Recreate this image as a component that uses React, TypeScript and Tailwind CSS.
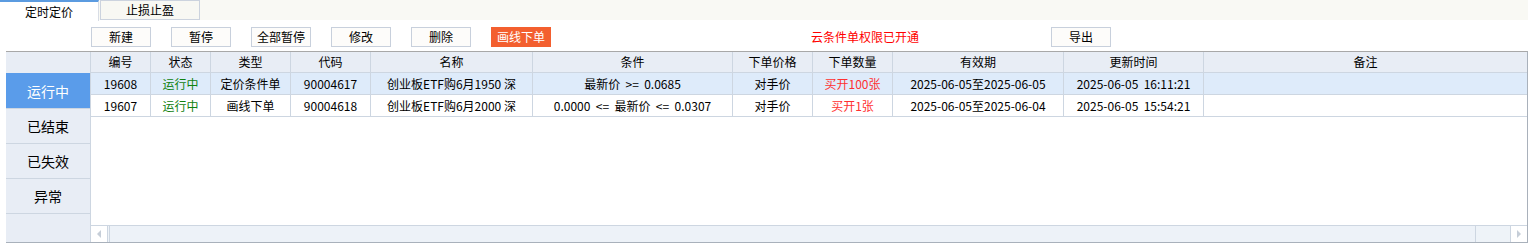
import React from 'react';

const cols = 'grid grid-cols-[60px_60px_80px_80px_162px_200px_80px_80px_171px_140px_1fr]';

const headers = ['编号', '状态', '类型', '代码', '名称', '条件', '下单价格', '下单数量', '有效期', '更新时间', '备注'];

interface Order {
    id: string;
    status: string;
    type: string;
    code: string;
    name: string;
    cond: string;
    price: string;
    qty: string;
    period: string;
    updated: string;
    note: string;
}

const orders: Order[] = [
    {
        id: '19608', status: '运行中', type: '定价条件单', code: '90004617', name: '创业板ETF购6月1950 深',
        cond: '最新价  >=  0.0685', price: '对手价', qty: '买开100张',
        period: '2025-06-05至2025-06-05', updated: '2025-06-05  16:11:21', note: '',
    },
    {
        id: '19607', status: '运行中', type: '画线下单', code: '90004618', name: '创业板ETF购6月2000 深',
        cond: '0.0000  <=  最新价  <=  0.0307', price: '对手价', qty: '买开1张',
        period: '2025-06-05至2025-06-04', updated: '2025-06-05  15:54:21', note: '',
    },
];

const tools = ['新建', '暂停', '全部暂停', '修改', '删除'];
const sideTabs = ['运行中', '已结束', '已失效', '异常'];

const Cell: React.FC<{ children?: React.ReactNode; className?: string }> = ({ children, className = '' }) => (
    <div className={`flex items-center justify-center border-r border-[#cdd6e1] whitespace-pre ${className}`}>{children}</div>
);

const App: React.FC = () => {
    return (
        <div className="w-[1528px] h-[243px] bg-white text-[12px] text-black overflow-hidden font-['Noto_Sans_CJK_SC','Noto_Sans',sans-serif]">
            {/* tabs */}
            <div className="flex h-[20px] bg-[#f9f9f4]">
                <div className="w-[99px] h-[21px] bg-white border-t-2 border-t-[#5b9be0] border-r border-r-[#d8dde5] flex items-center justify-center leading-none">
                    定时定价
                </div>
                <div className="ml-[1px] w-[100px] h-[20px] border border-[#ccd3de] bg-[#f8f8f3] flex items-center justify-center leading-none">
                    止损止盈
                </div>
            </div>

            {/* toolbar */}
            <div className="flex items-center h-[20px] mt-[7px] pl-[91px]">
                <div className="flex gap-[20px]">
                    {tools.map((t) => (
                        <button key={t} className="w-[60px] h-[20px] border border-[#c8d0dc] bg-[#fdfcfa] leading-none">
                            {t}
                        </button>
                    ))}
                    <button className="w-[60px] h-[20px] bg-[#f35f2f] text-white leading-none">画线下单</button>
                </div>
                <div className="ml-[260px] w-[240px] text-[#ff0000] leading-none">云条件单权限已开通</div>
                <button className="w-[60px] h-[20px] border border-[#c8d0dc] bg-[#fdfcfa] leading-none">导出</button>
            </div>

            {/* table frame */}
            <div className="mt-[4px] ml-[6px] w-[1522px] h-[192px] border-t border-t-[#a8a8a8] border-r border-r-[#a9b1bb] border-b border-b-[#a9b1bb] flex">
                {/* side */}
                <div className="w-[85px] bg-[#e8edf5] border-r border-[#cdd6e1] flex flex-col">
                    <div className="h-[21px]" />
                    {sideTabs.map((s, i) => (
                        <div
                            key={s}
                            className={`h-[35px] flex items-center justify-center text-[14px] leading-none ${
                                i === 0 ? 'bg-[#5a9cea] text-white' : 'border-t border-[#cdd6e1]'
                            }`}
                        >
                            {s}
                        </div>
                    ))}
                    <div className="flex-1 border-t border-[#cdd6e1]" />
                </div>

                {/* grid */}
                <div className="flex-1 flex flex-col">
                    <div className={`${cols} h-[21px] bg-[#e8edf5] border-b border-[#cdd6e1]`}>
                        {headers.map((h) => (
                            <Cell key={h} className="leading-none last:border-r-0">{h}</Cell>
                        ))}
                    </div>
                    {orders.map((o, i) => (
                        <div key={o.id} className={`${cols} h-[22px] border-b border-[#cdd6e1] ${i === 0 ? 'bg-[#deebfa]' : 'bg-white'}`}>
                            <Cell>{o.id}</Cell>
                            <Cell className="text-[#0f820f]">{o.status}</Cell>
                            <Cell>{o.type}</Cell>
                            <Cell>{o.code}</Cell>
                            <Cell>{o.name}</Cell>
                            <Cell>{o.cond}</Cell>
                            <Cell>{o.price}</Cell>
                            <Cell className="text-[#ff3030]">{o.qty}</Cell>
                            <Cell>{o.period}</Cell>
                            <Cell>{o.updated}</Cell>
                            <div>{o.note}</div>
                        </div>
                    ))}
                    <div className="flex-1" />
                    {/* horizontal scrollbar */}
                    <div className="h-[17px] flex bg-[#eef3f8] border-t border-[#cdd6e1]">
                        <div className="w-[17px] bg-white border-r border-[#cdd6e1] flex items-center justify-center">
                            <svg width="6" height="8" viewBox="0 0 6 8">
                                <path d="M5 0 L1 4 L5 8 Z" fill="#c6ced8" />
                            </svg>
                        </div>
                        <div className="w-[1367px] ml-[1px] border-l border-r border-[#cdd6e1] bg-[#edf2f8]" />
                        <div className="flex-1" />
                        <div className="w-[17px] bg-white border-l border-[#cdd6e1] flex items-center justify-center">
                            <svg width="6" height="8" viewBox="0 0 6 8">
                                <path d="M1 0 L5 4 L1 8 Z" fill="#c6ced8" />
                            </svg>
                        </div>
                    </div>
                </div>
            </div>
        </div>
    );
};

export default App;
